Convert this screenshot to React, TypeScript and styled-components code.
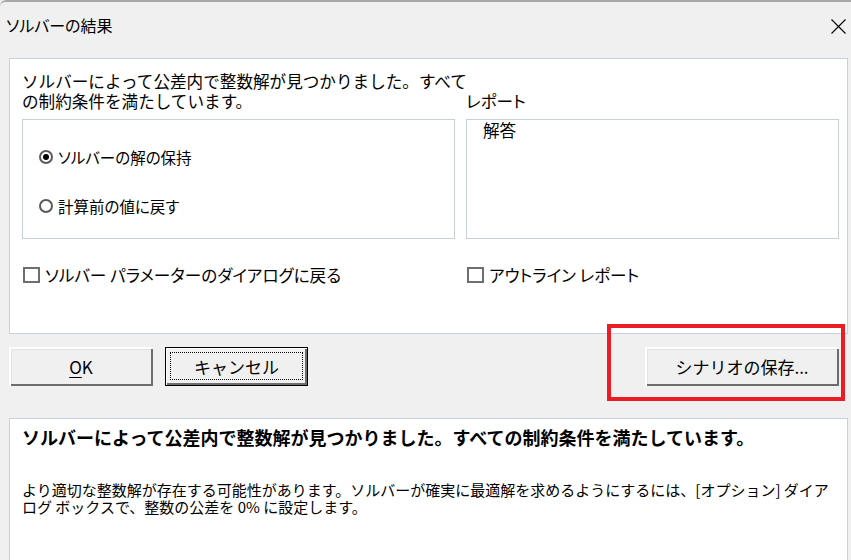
import React from "react";
import styled, { createGlobalStyle } from "styled-components";

const Global = createGlobalStyle`
  html, body { margin: 0; padding: 0; background: #f0f0f0; overflow: hidden; }
  * { box-sizing: border-box; }
  body {
    font-family: "Noto Sans CJK JP", "Noto Sans", sans-serif;
    color: #000;
  }
`;

const Window = styled.div`
  width: 851px;
  height: 560px;
  overflow: hidden;
  background: #f0f0f0;
  border-top: 2px solid #a8a8a8;
  border-top-left-radius: 6px;
`;

const TitleBar = styled.div`
  height: 46px;
  display: flex;
  align-items: center;
  justify-content: space-between;
  padding: 0 5px 0 6px;
`;

const Title = styled.span`
  font-size: 16px;
  line-height: 20px;
  font-feature-settings: "palt";
`;

const CloseIcon = styled.svg`
  width: 15px;
  height: 15px;
  margin-top: 2px;
`;

const Content = styled.div`
  padding: 10px 3px 0 9px;
`;

const MainPanel = styled.div`
  height: 276px;
  background: #fff;
  border: 1px solid #c7d0dc;
  padding: 12px 8px 0 12px;
`;

const Grid = styled.div`
  display: grid;
  grid-template-columns: 433px 373px;
  grid-template-rows: 40px 120px 20px;
  column-gap: 11px;
  row-gap: 8px;
`;

const Message = styled.div`
  font-size: 16.6px;
  line-height: 20px;
  white-space: nowrap;
`;

const GroupLabel = styled.div`
  align-self: end;
  font-size: 16.6px;
  line-height: 20px;
  font-feature-settings: "palt";
`;

const GroupBox = styled.div`
  border: 1px solid #c7d0dc;
  padding: 27px 0 0 16px;
  display: flex;
  flex-direction: column;
  gap: 29px;
`;

const RadioRow = styled.div`
  display: flex;
  align-items: center;
  height: 20px;
  font-size: 15.5px;
  font-feature-settings: "palt";
`;

const RadioDot = styled.span<{ $checked?: boolean }>`
  width: 14px;
  height: 14px;
  border-radius: 50%;
  border: 2px solid #5a5a5a;
  display: inline-flex;
  align-items: center;
  justify-content: center;
  margin-right: 5px;
  &::after {
    content: "";
    width: 6px;
    height: 6px;
    border-radius: 50%;
    background: ${(p) => (p.$checked ? "#000" : "transparent")};
  }
`;

const ListBox = styled.div`
  border: 1px solid #c7d0dc;
  padding: 1px 0 0 16px;
`;

const ListItem = styled.div`
  font-size: 16.6px;
  line-height: 18px;
`;

const CheckRow = styled.div`
  display: flex;
  align-items: center;
  margin-top: 28px;
  padding-left: 1px;
  font-size: 16.6px;
  line-height: 20px;
  white-space: nowrap;
  font-feature-settings: "palt";
`;

const CheckBox = styled.span`
  width: 17px;
  height: 16px;
  border: 2px solid #6e6e6e;
  margin-right: 5px;
  flex: none;
`;

const ButtonRow = styled.div`
  display: flex;
  align-items: center;
  margin-top: 13px;
  padding-right: 9px;
  gap: 12px;
`;

const Button = styled.button<{ $width: number; $focused?: boolean }>`
  width: ${(p) => p.$width}px;
  height: 39px;
  background: #f0f0f0;
  font-family: "Noto Sans CJK JP", "Noto Sans", sans-serif;
  font-size: 17px;
  color: #000;
  padding: 0;
  position: relative;
  border: ${(p) => (p.$focused ? "1px solid #000" : "none")};
  box-shadow: ${(p) =>
    p.$focused
      ? "inset 1px 1px #fff, inset -2px -2px #6d6d6d"
      : "inset 2px 2px #fff, inset -2px -2px #6d6d6d, inset 3px 3px #e3e3e3"};
  &::after {
    content: "";
    display: ${(p) => (p.$focused ? "block" : "none")};
    position: absolute;
    inset: 4px 4px 5px 4px;
    border: 1px dotted #000;
  }
`;

const Underlined = styled.span`
  text-decoration: underline;
  text-underline-offset: 3px;
`;

const ScenarioWrap = styled.div`
  position: relative;
  margin-left: auto;
`;

const Highlight = styled.div`
  position: absolute;
  left: -38px;
  right: -6px;
  top: -23px;
  bottom: -15px;
  border: 4px solid #ec1c24;
  pointer-events: none;
`;

const DetailPanel = styled.div`
  margin-top: 32px;
  height: 200px;
  background: #fff;
  border: 1px solid #c7d0dc;
  padding: 7px 8px 0 12px;
`;

const DetailTitle = styled.div`
  font-size: 18px;
  font-weight: 700;
  line-height: 22px;
  white-space: nowrap;
`;

const DetailText = styled.div`
  margin-top: 33px;
  font-size: 15px;
  line-height: 17px;
  white-space: nowrap;
`;

export default function App() {
  return (
    <>
      <Global />
      <Window>
        <TitleBar>
          <Title>ソルバーの結果</Title>
          <CloseIcon viewBox="0 0 15 15">
            <line x1="0.5" y1="0.5" x2="14.5" y2="14.5" stroke="#000" strokeWidth="1.1" />
            <line x1="14.5" y1="0.5" x2="0.5" y2="14.5" stroke="#000" strokeWidth="1.1" />
          </CloseIcon>
        </TitleBar>
        <Content>
          <MainPanel>
            <Grid>
              <Message>
                ソルバーによって公差内で整数解が見つかりました。すべて
                <br />
                の制約条件を満たしています。
              </Message>
              <GroupLabel>レポート</GroupLabel>
              <GroupBox>
                <RadioRow>
                  <RadioDot $checked />
                  ソルバーの解の保持
                </RadioRow>
                <RadioRow>
                  <RadioDot />
                  計算前の値に戻す
                </RadioRow>
              </GroupBox>
              <ListBox>
                <ListItem>解答</ListItem>
              </ListBox>
              <CheckRow>
                <CheckBox />
                ソルバー パラメーターのダイアログに戻る
              </CheckRow>
              <CheckRow>
                <CheckBox />
                アウトライン レポート
              </CheckRow>
            </Grid>
          </MainPanel>
          <ButtonRow>
            <Button $width={144}>
              <Underlined>O</Underlined>K
            </Button>
            <Button $width={143} $focused>
              キャンセル
            </Button>
            <ScenarioWrap>
              <Button $width={194}>シナリオの保存...</Button>
              <Highlight />
            </ScenarioWrap>
          </ButtonRow>
          <DetailPanel>
            <DetailTitle>
              ソルバーによって公差内で整数解が見つかりました。すべての制約条件を満たしています。
            </DetailTitle>
            <DetailText>
              より適切な整数解が存在する可能性があります。ソルバーが確実に最適解を求めるようにするには、[オプション] ダイア
              <br />
              ログ ボックスで、整数の公差を 0% に設定します。
            </DetailText>
          </DetailPanel>
        </Content>
      </Window>
    </>
  );
}
